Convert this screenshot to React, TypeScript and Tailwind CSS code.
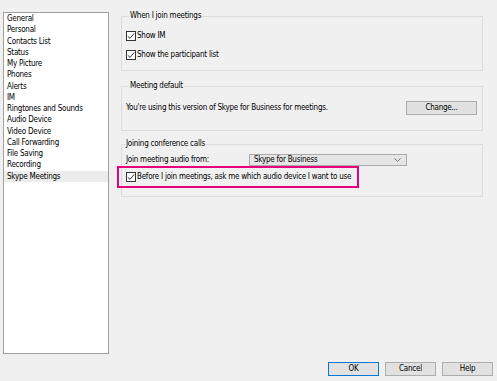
const pages = [
  'General',
  'Personal',
  'Contacts List',
  'Status',
  'My Picture',
  'Phones',
  'Alerts',
  'IM',
  'Ringtones and Sounds',
  'Audio Device',
  'Video Device',
  'Call Forwarding',
  'File Saving',
  'Recording',
  'Skype Meetings',
];

function CheckBox({ label }: { label: string }) {
  return (
    <div className="flex items-center h-[10px]">
      <span className="w-[10px] h-[10px] border border-[#333333] bg-white flex items-center justify-center shrink-0">
        <svg width="8" height="8" viewBox="0 0 8 8">
          <path d="M0.8 4.3 L3 6.4 L7.2 1.4" fill="none" stroke="#333333" strokeWidth="1" />
        </svg>
      </span>
      <span className="ml-[1px] whitespace-nowrap">{label}</span>
    </div>
  );
}

function Group({ title, children, className }: { title: string; children: React.ReactNode; className?: string }) {
  return (
    <fieldset className={`border border-[#dcdcdc] ${className ?? ''}`}>
      <legend className="ml-[3px] px-[1px] leading-[10px]">{title}</legend>
      {children}
    </fieldset>
  );
}

function Button({ label, primary, className }: { label: string; primary?: boolean; className?: string }) {
  return (
    <button
      className={`h-[14px] bg-[#e1e1e1] border ${primary ? 'border-[#0078d7]' : 'border-[#adadad]'} flex items-center justify-center leading-none ${className ?? ''}`}
    >
      {label}
    </button>
  );
}

export default function App() {
  return (
    <div
      className="w-[497px] h-[381px] bg-[#f0f0f0] text-black text-[8px] tracking-[-0.25px] flex flex-col overflow-hidden"
      style={{ fontFamily: '"DejaVu Sans Condensed", "DejaVu Sans", sans-serif' }}
    >
      <div className="flex items-start">
        {/* options list */}
        <div className="mt-[12px] ml-[3px] w-[106px] h-[342px] bg-white border border-[#a0a0a0]">
          {pages.map((p) => (
            <div
              key={p}
              className={`h-[11.25px] leading-[11.25px] pl-[3px] whitespace-nowrap ${p === 'Skype Meetings' ? 'bg-[#ececec]' : ''}`}
            >
              {p}
            </div>
          ))}
        </div>

        {/* settings */}
        <div className="ml-[12px] w-[362px] pt-[11px] flex flex-col">
          <Group title="When I join meetings" className="pl-[4px] pt-[10px] pb-[10px]">
            <div className="flex flex-col gap-[9px]">
              <CheckBox label="Show IM" />
              <CheckBox label="Show the participant list" />
            </div>
          </Group>

          <Group title="Meeting default" className="mt-[10px] pl-[4px] pr-[5px] pt-[10px] pb-[15px]">
            <div className="flex items-center justify-between">
              <span>You're using this version of Skype for Business for meetings.</span>
              <Button label="Change..." className="w-[71px]" />
            </div>
          </Group>

          <Group title="Joining conference calls" className="mt-[8px] pt-[5px] pb-[8px]">
            <div className="flex items-center pl-[4px] h-[12px]">
              <span className="w-[123px]">Join meeting audio from:</span>
              <div className="w-[158px] h-[12px] bg-[#e5e5e5] border border-[#acacac] flex items-center justify-between pl-[4px] pr-[5px]">
                <span>Skype for Business</span>
                <svg width="7" height="4" viewBox="0 0 7 4">
                  <path d="M0.5 0.5 L3.5 3.3 L6.5 0.5" fill="none" stroke="#555555" strokeWidth="0.8" />
                </svg>
              </div>
            </div>
            <div className="-ml-[5px] w-[242px] h-[22px] border-2 border-[#e6007e] flex items-center pl-[7px]">
              <CheckBox label="Before I join meetings, ask me which audio device I want to use" />
            </div>
          </Group>
        </div>
      </div>

      <div className="flex justify-end gap-[6px] mt-[8px] pr-[4px]">
        <Button label="OK" primary className="w-[51px]" />
        <Button label="Cancel" className="w-[51px]" />
        <Button label="Help" className="w-[51px]" />
      </div>
    </div>
  );
}
